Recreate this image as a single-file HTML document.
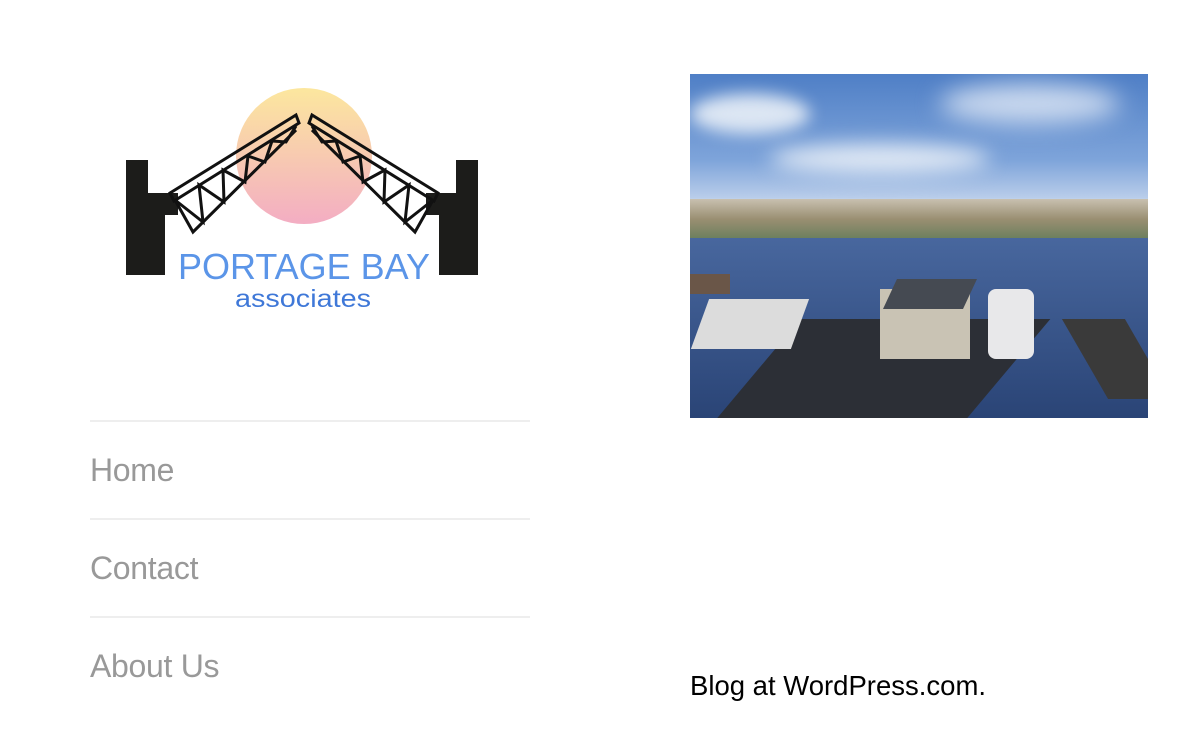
<!DOCTYPE html>
<html><head><meta charset="utf-8"><style>
body{margin:0;width:1180px;height:734px;background:#fff;font-family:"Liberation Sans",sans-serif;position:relative;overflow:hidden}
.nav{position:absolute;left:90px;width:440px;top:420px}
.nav div{border-top:2px solid #eee;height:96px;font-size:32px;color:#999;line-height:96px;letter-spacing:-0.3px}
.photo{position:absolute;left:690px;top:74px;width:458px;height:344px;overflow:hidden;
background:linear-gradient(#4f7fc6 0%,#7ea4da 25%,#b9cdea 36%,#e3eaf3 38%)}
.foot{position:absolute;left:690px;top:670px;font-size:27.5px;color:#000}
</style></head><body>
<svg style="position:absolute;left:0;top:0" width="600" height="340">
<defs><linearGradient id="g" x1="0" y1="0" x2="0" y2="1"><stop offset="0" stop-color="#fce79e"/><stop offset="1" stop-color="#f3adc3"/></linearGradient></defs>
<circle cx="304" cy="156" r="68" fill="url(#g)"/>
<path d="M126 160H148V193H178V215H165V275H126Z" fill="#1c1c1a"/>
<path d="M478 160H456V193H426V215H439V275H478Z" fill="#1c1c1a"/>
<g fill="none" stroke="#111" stroke-width="3" stroke-linejoin="miter">
<path d="M170 193L296 115L299 123L174 201Z"/>
<path d="M175 200L193 232L296 130"/>
<path d="M175 200L203 222L199 185L224 202L223 170L245 182L248 156L265 162L272 141L286 142L296 126"/>
<path d="M438 193L312 115L309 123L434 201Z"/>
<path d="M433 200L415 232L312 130"/>
<path d="M433 200L405 222L409 185L384 202L385 170L363 182L360 156L343 162L336 141L322 142L312 126"/>
</g>
<text x="304" y="279" text-anchor="middle" font-family="Liberation Sans,sans-serif" font-size="36" fill="#5b95e8" textLength="252" lengthAdjust="spacingAndGlyphs">PORTAGE BAY</text>
<text x="303" y="307" text-anchor="middle" font-family="Liberation Sans,sans-serif" font-size="25" fill="#3f78d8" textLength="136" lengthAdjust="spacingAndGlyphs">associates</text>
</svg>
<div class="photo">
<div style="position:absolute;left:0;top:20px;width:120px;height:40px;background:#dce6f3;border-radius:50%;filter:blur(8px)"></div>
<div style="position:absolute;left:80px;top:70px;width:220px;height:30px;background:#dfe8f4;border-radius:50%;filter:blur(10px)"></div>
<div style="position:absolute;left:250px;top:10px;width:180px;height:40px;background:#c9d8ee;border-radius:50%;filter:blur(12px)"></div>
<div style="position:absolute;left:0;top:125px;width:458px;height:40px;background:linear-gradient(#c8c0b0,#9a8f72 50%,#6b7f5e)"></div>
<div style="position:absolute;left:0;top:164px;width:458px;height:180px;background:linear-gradient(#48679e,#2a4476)"></div>
<div style="position:absolute;left:60px;top:245px;width:250px;height:120px;background:#2c2f36;transform:skewX(-40deg)"></div>
<div style="position:absolute;left:190px;top:215px;width:90px;height:70px;background:#c9c3b4"></div>
<div style="position:absolute;left:200px;top:205px;width:80px;height:30px;background:#454a52;transform:skewX(-25deg)"></div>
<div style="position:absolute;left:298px;top:215px;width:46px;height:70px;background:#e8e8ea;border-radius:8px"></div>
<div style="position:absolute;left:10px;top:225px;width:100px;height:50px;background:#dcdcdc;transform:skewX(-20deg)"></div>
<div style="position:absolute;left:0;top:200px;width:40px;height:20px;background:#6a5648"></div>
<div style="position:absolute;left:395px;top:245px;width:63px;height:80px;background:#3a3a3a;transform:skewX(30deg)"></div>
</div>
<div class="nav"><div>Home</div><div>Contact</div><div>About Us</div></div>
<div class="foot">Blog at WordPress.com.</div>
</body></html>
